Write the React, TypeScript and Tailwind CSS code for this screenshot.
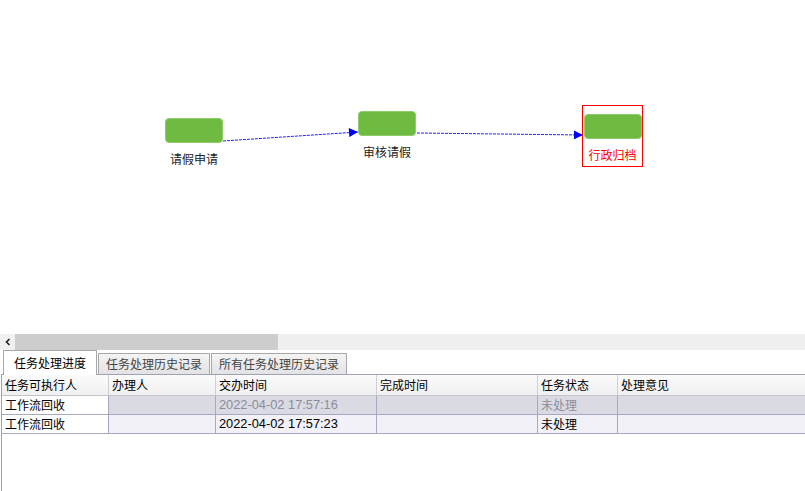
import React from 'react';

const font = { fontFamily: '"Noto Sans CJK SC", "Liberation Sans", sans-serif' };

const columns = [
  { title: '任务可执行人', width: 'w-[107px]' },
  { title: '办理人', width: 'w-[107px]' },
  { title: '交办时间', width: 'w-[161px]' },
  { title: '完成时间', width: 'w-[161px]' },
  { title: '任务状态', width: 'w-[80px]' },
  { title: '处理意见', width: 'flex-1' },
];

const rows = [
  { values: ['工作流回收', '', '2022-04-02 17:57:16', '', '未处理', ''], done: true },
  { values: ['工作流回收', '', '2022-04-02 17:57:23', '', '未处理', ''], done: false },
];

function Node({ label, active }: { label: string; active?: boolean }) {
  return (
    <div className="flex flex-col items-center">
      <div className="w-[58px] h-[25px] rounded-[4px] bg-[#6fbb41] border border-[#8fcc6a]" />
      <div className={`mt-[9px] text-[12px] leading-[14px] ${active ? 'text-[#ff0000]' : 'text-[#222]'}`}>
        {label}
      </div>
    </div>
  );
}

function Diagram() {
  return (
    <div className="relative h-[334px] bg-white">
      <svg className="absolute left-0 top-0" width="805" height="334">
        <defs>
          <marker id="head" viewBox="0 0 10 10" refX="10" refY="5" markerWidth="11" markerHeight="9" orient="auto" markerUnits="userSpaceOnUse">
            <path d="M0 0 L10 5 L0 10 z" fill="#0000ff" />
          </marker>
        </defs>
        <line x1="223" y1="141" x2="358" y2="132" stroke="#2020ff" strokeWidth="1" strokeDasharray="3 1" markerEnd="url(#head)" />
        <line x1="417" y1="133" x2="583" y2="135" stroke="#2020ff" strokeWidth="1" strokeDasharray="3 1" markerEnd="url(#head)" />
      </svg>
      <div className="absolute left-[165px] top-[118px]">
        <Node label="请假申请" />
      </div>
      <div className="absolute left-[358px] top-[111px]">
        <Node label="审核请假" />
      </div>
      <div className="absolute left-[582px] top-[105px] w-[61px] h-[62px] border border-[#ff0000] pt-[8px] flex justify-center">
        <Node label="行政归档" active />
      </div>
    </div>
  );
}

function ScrollBar() {
  return (
    <div className="flex h-[16px] bg-[#f0f0f0]">
      <div className="w-[15px] flex items-center justify-center">
        <svg width="8" height="8" viewBox="0 0 8 8">
          <path d="M5.5 1 L2.5 4 L5.5 7" stroke="#222" strokeWidth="1.6" fill="none" />
        </svg>
      </div>
      <div className="w-[263px] bg-[#cdcdcd]" />
    </div>
  );
}

function Tabs() {
  const tabs = ['任务处理进度', '任务处理历史记录', '所有任务处理历史记录'];
  return (
    <div className="flex items-end h-[24px] pl-[3px] bg-white">
      {tabs.map((t, i) =>
        i === 0 ? (
          <div
            key={t}
            className="relative z-10 h-[25px] -mb-px px-[10px] flex items-center border border-b-0 border-[#a7a7a7] bg-white text-[12px] text-black"
          >
            {t}
          </div>
        ) : (
          <div
            key={t}
            className="h-[21px] ml-px px-[7px] flex items-center border border-b-0 border-[#a7a7a7] bg-gradient-to-b from-[#f4f4f4] to-[#e3e3e6] text-[12px] text-[#444]"
          >
            {t}
          </div>
        )
      )}
    </div>
  );
}

function Grid() {
  return (
    <div className="flex-1 ml-px border-l border-t border-[#a0a0b8] bg-white">
      <div className="flex h-[21px] border-b border-[#c4c4cc] bg-gradient-to-b from-[#fbfbfb] to-[#f0f0f0]">
        {columns.map((c, ci) => (
          <div
            key={c.title}
            className={`${c.width} shrink-0 px-[3px] flex items-center text-[12px] text-black ${ci < 5 ? 'border-r border-[#cfcfd4]' : ''}`}
          >
            {c.title}
          </div>
        ))}
      </div>
      {rows.map((r, ri) => (
        <div
          key={ri}
          className={`flex h-[19px] border-b border-[#a8a8c0] ${r.done ? 'bg-[#dadae2] text-[#8c8c9c]' : 'bg-[#f1f1f7] text-black'}`}
        >
          {r.values.map((v, ci) => (
            <div
              key={ci}
              className={`${columns[ci].width} shrink-0 px-[3px] flex items-center ${ci < 5 ? 'border-r border-[#a8a8c0]' : ''} ${
                ci === 0 ? 'bg-white text-black' : ''
              } ${ci === 2 ? 'text-[12.8px]' : 'text-[12px]'}`}
              style={ci === 2 ? { fontFamily: '"Liberation Sans", sans-serif' } : undefined}
            >
              {v}
            </div>
          ))}
        </div>
      ))}
    </div>
  );
}

export default function App() {
  return (
    <div className="w-[805px] h-[491px] flex flex-col overflow-hidden bg-white" style={font}>
      <Diagram />
      <ScrollBar />
      <Tabs />
      <Grid />
    </div>
  );
}
